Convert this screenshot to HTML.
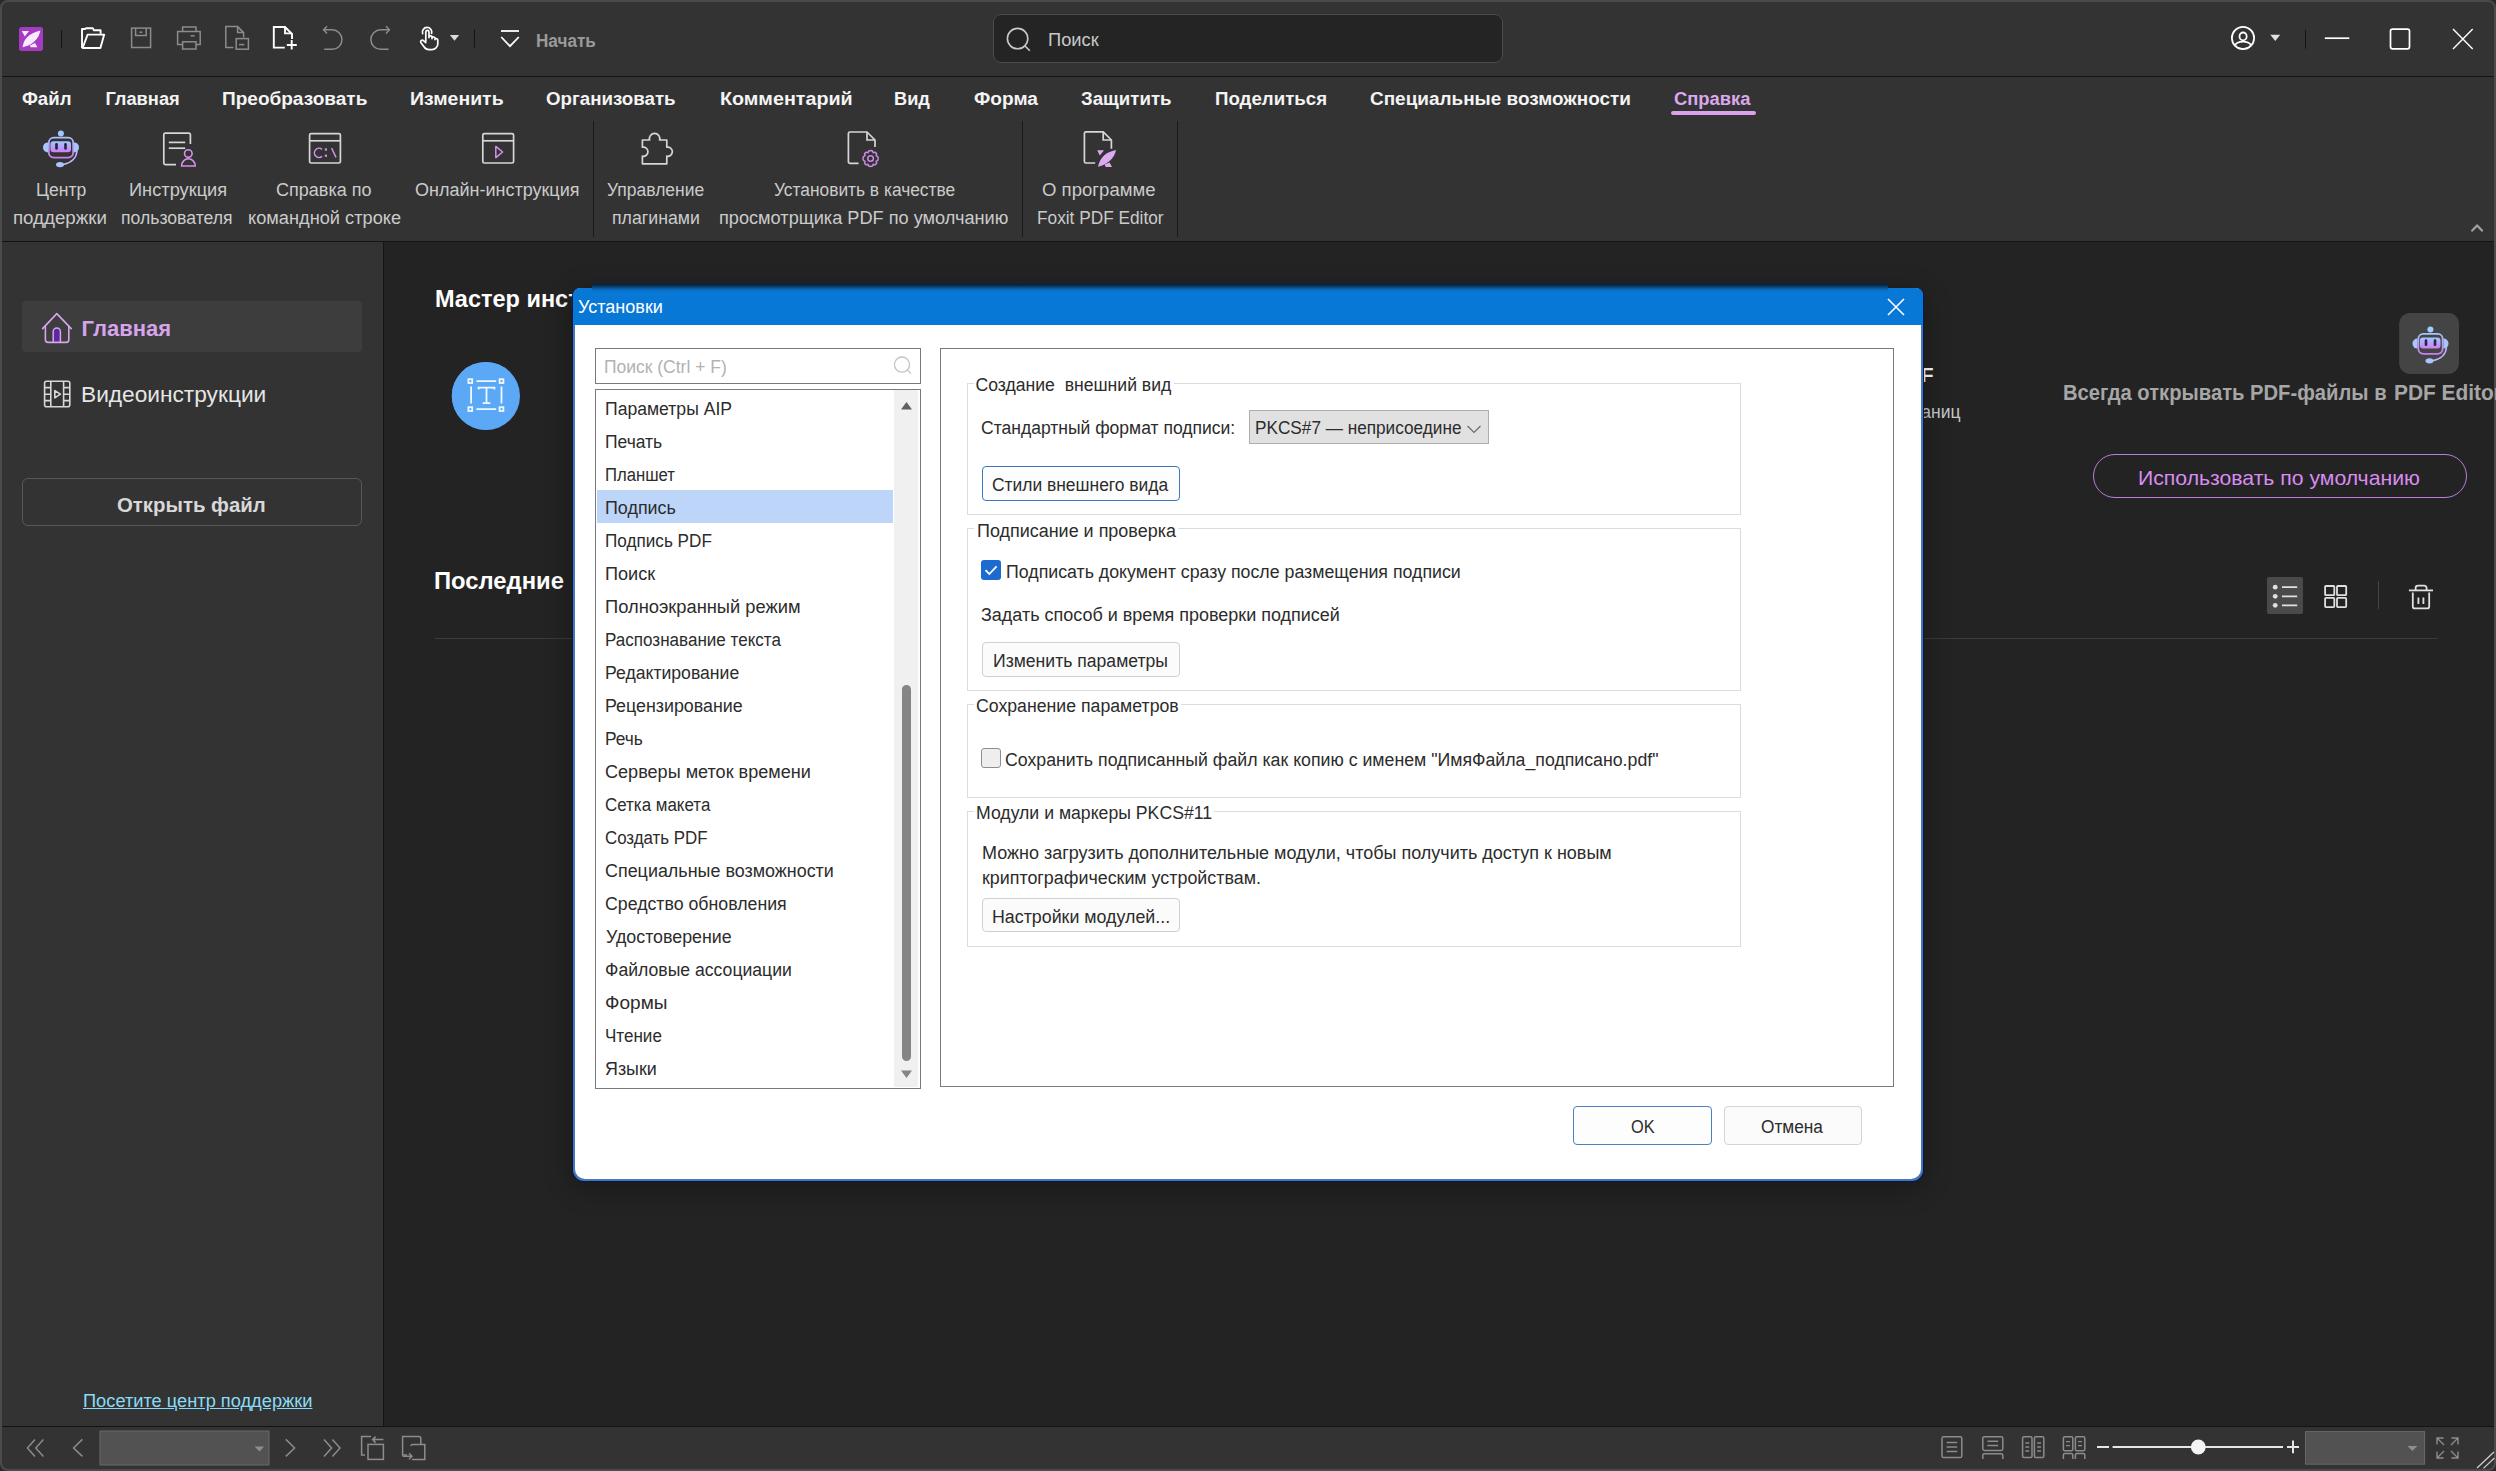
<!DOCTYPE html>
<html><head><meta charset="utf-8">
<style>
*{box-sizing:border-box;margin:0;padding:0}
html,body{width:2496px;height:1471px;overflow:hidden;background:#2a2a2a;font-family:"Liberation Sans",sans-serif}
.a{position:absolute}
.t{position:absolute;line-height:1;white-space:pre;top:calc(var(--b)*1px - 0.85em)}
.menu{font-size:18.3px;font-weight:700;color:#f4f4f4}
.rb{font-size:18px;color:#cbcbcb}
.dl{font-size:17.6px;color:#2c2c2c}
svg{position:absolute;overflow:visible}
</style></head><body>
<!-- window frame -->
<div class="a" style="left:0;top:0;width:2496px;height:1471px;background:#333;border-radius:8px"></div>
<!-- top toolbar line -->
<div class="a" style="left:0;top:76px;width:2496px;height:1px;background:#141414"></div>
<div class="a" style="left:0;top:241px;width:2496px;height:1px;background:#141414"></div>
<!-- main area -->
<div class="a" style="left:384px;top:242px;width:2112px;height:1184px;background:#232323"></div>
<div class="a" style="left:383px;top:242px;width:1px;height:1184px;background:#141414"></div>
<div class="a" style="left:0;top:1426px;width:2496px;height:1px;background:#141414"></div>
<!-- window border -->
<div class="a" style="left:0;top:0;width:2496px;height:1471px;border:2px solid #4b4b4b;border-radius:8px"></div>

<!-- SEARCH BOX -->
<div class="a" style="left:993px;top:14px;width:510px;height:49px;border:1px solid #4a4a4a;border-radius:8px;background:#242424"></div>
<div class="t" style="--b:46.5;left:1048.38px;font-size:18px;color:#c8c8c8;transform:scaleX(1.0164);transform-origin:0 0">Поиск</div>
<div class="t" style="--b:47;left:536.05px;font-size:18px;color:#9a9a9a;font-weight:700;transform:scaleX(0.9508);transform-origin:0 0">Начать</div>


<svg style="left:0;top:0" width="2496" height="1471" viewBox="0 0 2496 1471">
<!-- logo -->
<rect x="19" y="27" width="24" height="24" rx="2.5" fill="#a53bc1"/>
<path d="M21.8 31 L29 31 L24.8 36.4 Z" fill="#fbeaff"/>
<path d="M22.6 47.2 C23.4 40 28.5 33.2 40.4 30.6 C38.6 39.5 32 45.8 22.6 47.2 Z" fill="#fbeaff"/>
<path d="M30 45.6 L35 43 L37.4 47.2 L30.6 47.2 Z" fill="#fbeaff"/>
<line x1="61.5" y1="30" x2="61.5" y2="48" stroke="#141414" stroke-width="1"/>
<!-- folder -->
<g fill="none" stroke="#fff" stroke-width="1.9" stroke-linejoin="round">
<path d="M82 48 L82 29 L85 29 L86 28.2 L92.8 28.2 L93.8 30.2 L100.6 30.2 L100.6 33.8"/>
<path d="M82.6 48 L87.6 34.6 L104.2 34.6 L100.4 48 Z"/>
</g>
<!-- save -->
<g fill="none" stroke="#8c8c8c" stroke-width="1.5">
<rect x="131.6" y="28.1" width="19" height="19.4"/>
<path d="M135.6 28.1 L135.6 35.6 L146.2 35.6 L146.2 28.1"/>
<line x1="139.4" y1="32.2" x2="142.4" y2="32.2"/>
</g>
<!-- print -->
<g fill="none" stroke="#8c8c8c" stroke-width="1.5">
<path d="M182.6 31.3 L182.6 27 L196 27 L196 31.3"/>
<path d="M182.2 44.6 L177.6 44.6 L177.6 31.4 L200.2 31.4 L200.2 44.6 L196 44.6"/>
<rect x="182.6" y="41.8" width="13.4" height="7.2"/>
<line x1="190.6" y1="35.8" x2="194.6" y2="35.8"/>
</g>
<!-- export doc -->
<g fill="none" stroke="#8c8c8c" stroke-width="1.5">
<path d="M233.4 47.6 L225.8 47.6 L225.8 26.6 L237.6 26.6 L243.6 32.6 L243.6 37.4"/>
<path d="M237.6 26.6 L237.6 32.6 L243.6 32.6"/>
<rect x="236.2" y="38.6" width="12.2" height="10.6"/>
<line x1="239" y1="44.6" x2="244.4" y2="44.6"/>
</g>
<!-- new doc -->
<g fill="none" stroke="#fff" stroke-width="1.9">
<path d="M284.8 47.6 L273.8 47.6 L273.8 27 L285 27 L292 34 L292 39"/>
<path d="M285 27 L285 33.4 L292 33.4"/>
<path d="M286.8 45 L296.8 45 M291.7 40 L291.7 49.6"/>
</g>
<!-- undo / redo -->
<g fill="none" stroke="#8c8c8c" stroke-width="1.5">
<path d="M323.6 29.8 L332.2 29.8 A9.75 9.75 0 0 1 332.2 49.3 L324.2 49.3"/>
<path d="M327 26.2 L323.6 29.8 L327 33.4"/>
<path d="M389.4 29.8 L380.6 29.8 A9.75 9.75 0 0 0 380.6 49.3 L388.6 49.3"/>
<path d="M386 26.2 L389.4 29.8 L386 33.4"/>
</g>
<!-- hand -->
<g fill="none" stroke="#fff" stroke-width="1.7" stroke-linecap="round" stroke-linejoin="round">
<path d="M422.6 33.6 A4.7 4.7 0 1 1 431.6 33.4"/>
<path d="M425.8 41 L425.8 32 A1.6 1.6 0 0 1 429 32 L429 37.6 M429 37.2 A1.5 1.5 0 0 1 432 37.6 L432 38.6 M432 38.2 A1.5 1.5 0 0 1 435 38.8 L435 39.6 M435 39.4 A1.5 1.5 0 0 1 437.8 40.2 L437.8 44 A5.8 5.8 0 0 1 432 49.6 L429 49.6 A6 6 0 0 1 424 46.8 L420.8 42.4 A1.6 1.6 0 0 1 423.4 40.6 L425.8 42.6"/>
</g>
<path d="M449.9 35 L459.1 35 L454.5 40.8 Z" fill="#dcdcdc"/>
<line x1="474.5" y1="29.5" x2="474.5" y2="47.6" stroke="#141414" stroke-width="1"/>
<!-- filter -->
<g fill="none" stroke="#fff" stroke-width="1.8">
<line x1="501" y1="31" x2="519" y2="31"/>
<path d="M501.2 37 L510 46.2 L518.8 37"/>
</g>
<!-- search top -->
<g fill="none" stroke="#c8c8c8" stroke-width="1.6">
<circle cx="1017.6" cy="38.6" r="10.2"/>
<line x1="1024.8" y1="45.8" x2="1029.8" y2="50.8"/>
</g>
<!-- user -->
<g fill="none" stroke="#fff" stroke-width="1.8">
<circle cx="2243" cy="38" r="11.1"/>
<ellipse cx="2243.1" cy="36.4" rx="3.6" ry="3.9"/>
<clipPath id="uc"><circle cx="2243" cy="38" r="11"/></clipPath><ellipse cx="2243" cy="45.4" rx="7.7" ry="3.7" clip-path="url(#uc)"/>
</g>
<path d="M2270.3 34.8 L2280.2 34.8 L2275.25 41.1 Z" fill="#e0e0e0"/>
<line x1="2305.5" y1="30" x2="2305.5" y2="48.7" stroke="#141414" stroke-width="1"/>
<g fill="none" stroke="#fff" stroke-width="1.7">
<line x1="2324.8" y1="38.2" x2="2349.3" y2="38.2"/>
<rect x="2390.5" y="29.1" width="19" height="19.7" rx="2"/>
<path d="M2453 29 L2472.7 48.9 M2472.7 29 L2453 48.9" stroke-width="1.4"/>
</g>
</svg>

<!-- MENU -->
<div class="t menu" style="--b:106;left:22.00px;transform:scaleX(1.0167);transform-origin:0 0">Файл</div>
<div class="t menu" style="--b:106;left:105.40px;transform:scaleX(1.0000);transform-origin:0 0">Главная</div>
<div class="t menu" style="--b:106;left:222.36px;transform:scaleX(1.0407);transform-origin:0 0">Преобразовать</div>
<div class="t menu" style="--b:106;left:410.34px;transform:scaleX(1.0644);transform-origin:0 0">Изменить</div>
<div class="t menu" style="--b:106;left:546.40px;transform:scaleX(1.0238);transform-origin:0 0">Организовать</div>
<div class="t menu" style="--b:106;left:719.52px;transform:scaleX(1.0777);transform-origin:0 0">Комментарий</div>
<div class="t menu" style="--b:106;left:893.60px;transform:scaleX(0.9943);transform-origin:0 0">Вид</div>
<div class="t menu" style="--b:106;left:973.80px;transform:scaleX(1.0452);transform-origin:0 0">Форма</div>
<div class="t menu" style="--b:106;left:1081.00px;transform:scaleX(1.0205);transform-origin:0 0">Защитить</div>
<div class="t menu" style="--b:106;left:1215.18px;transform:scaleX(1.0223);transform-origin:0 0">Поделиться</div>
<div class="t menu" style="--b:106;left:1370.40px;transform:scaleX(1.0359);transform-origin:0 0">Специальные возможности</div>
<div class="t menu" style="--b:106;left:1674.20px;color:#dba8ec;transform:scaleX(1.0052);transform-origin:0 0">Справка</div>
<div class="a" style="left:1671px;top:111px;width:85px;height:4px;border-radius:2px;background:#d9a2ea"></div>

<!-- RIBBON LABELS -->
<div class="t rb" style="--b:196.3;left:35.82px;transform:scaleX(0.9760);transform-origin:0 0">Центр</div>
<div class="t rb" style="--b:224.5;left:12.96px;transform:scaleX(1.0387);transform-origin:0 0">поддержки</div>
<div class="t rb" style="--b:196.3;left:128.79px;transform:scaleX(1.0127);transform-origin:0 0">Инструкция</div>
<div class="t rb" style="--b:224.5;left:121.42px;transform:scaleX(0.9786);transform-origin:0 0">пользователя</div>
<div class="t rb" style="--b:196.3;left:275.60px;transform:scaleX(1.0022);transform-origin:0 0">Справка по</div>
<div class="t rb" style="--b:224.5;left:247.59px;transform:scaleX(1.0120);transform-origin:0 0">командной строке</div>
<div class="t rb" style="--b:196.3;left:415.00px;transform:scaleX(1.0000);transform-origin:0 0">Онлайн-инструкция</div>
<div class="a" style="left:593px;top:121px;width:1px;height:116px;background:#1a1a1a"></div>
<div class="t rb" style="--b:196.3;left:607.40px;transform:scaleX(0.9720);transform-origin:0 0">Управление</div>
<div class="t rb" style="--b:224.5;left:611.61px;transform:scaleX(0.9839);transform-origin:0 0">плагинами</div>
<div class="t rb" style="--b:196.3;left:773.80px;transform:scaleX(0.9638);transform-origin:0 0">Установить в качестве</div>
<div class="t rb" style="--b:224.5;left:718.79px;transform:scaleX(1.0091);transform-origin:0 0">просмотрщика PDF по умолчанию</div>
<div class="a" style="left:1022px;top:121px;width:1px;height:116px;background:#1a1a1a"></div>
<div class="t rb" style="--b:196.3;left:1042.37px;transform:scaleX(1.0312);transform-origin:0 0">О программе</div>
<div class="t rb" style="--b:224.5;left:1036.64px;transform:scaleX(0.9588);transform-origin:0 0">Foxit PDF Editor</div>
<div class="a" style="left:1177px;top:121px;width:1px;height:116px;background:#1a1a1a"></div>


<svg style="left:0;top:0" width="2496" height="1471" viewBox="0 0 2496 1471">
<defs>
<linearGradient id="rg" x1="0" y1="0" x2="0" y2="1"><stop offset="0" stop-color="#9cc8ff"/><stop offset="1" stop-color="#d07ef0"/></linearGradient>
<linearGradient id="rg2" x1="0" y1="0" x2="0" y2="1"><stop offset="0" stop-color="#a8c4ff"/><stop offset="1" stop-color="#c77ff0"/></linearGradient>
</defs>
<!-- robot ribbon -->
<g>
<circle cx="60.9" cy="133.4" r="3" fill="#a0c8ff"/>
<path d="M48.2 147.4 A5.6 5.2 0 0 0 48.2 142.4 L48.2 152.4 Z" fill="#a9c4ff"/>
<path d="M43 147.4 A5 5 0 0 1 48 142.4 L48 152.4 A5 5 0 0 1 43 147.4 Z" fill="#a9c4ff"/>
<path d="M79 147.4 A5 5 0 0 0 74 142.4 L74 152.4 A5 5 0 0 0 79 147.4 Z" fill="#a9c4ff"/>
<rect x="48.8" y="137.6" width="24.4" height="20" rx="5" fill="none" stroke="url(#rg2)" stroke-width="1.8"/>
<rect x="50.4" y="141.2" width="20.6" height="11" rx="3" fill="url(#rg)"/>
<rect x="55.2" y="143" width="2.6" height="6.8" rx="1.3" fill="#2a1f48"/>
<rect x="64.2" y="143" width="2.6" height="6.8" rx="1.3" fill="#2a1f48"/>
<path d="M77 151 Q76 162 63 164.6" fill="none" stroke="#c0b8ff" stroke-width="1.5"/>
<ellipse cx="60" cy="164.6" rx="4" ry="2.6" fill="#a9c4ff"/>
</g>
<!-- instruction -->
<g fill="none" stroke="#d6d6d6" stroke-width="1.7">
<path d="M176 164.6 L165.4 164.6 A1.6 1.6 0 0 1 163.8 163 L163.8 134.8 A1.6 1.6 0 0 1 165.4 133.2 L188.8 133.2 A1.6 1.6 0 0 1 190.4 134.8 L190.4 144"/>
<line x1="168.8" y1="142.4" x2="185.2" y2="142.4"/>
<line x1="168.8" y1="148.2" x2="185.2" y2="148.2"/>
</g>
<g fill="none" stroke="#d690ec" stroke-width="1.6">
<circle cx="188.3" cy="153.6" r="3.8"/>
<path d="M181.6 166 A6.8 7.2 0 0 1 195.2 166 Z"/>
</g>
<!-- cmd -->
<g fill="none" stroke="#d6d6d6" stroke-width="1.7">
<rect x="309.6" y="133.6" width="30.8" height="29.4" rx="1.6"/>
<line x1="309.6" y1="140.8" x2="340.4" y2="140.8"/>
</g>
<g fill="none" stroke="#d690ec" stroke-width="1.5">
<path d="M322 149.4 A4.6 4.6 0 1 0 322 156.4"/>
<line x1="331.6" y1="148" x2="336" y2="157.4"/>
</g>
<rect x="324.8" y="148.4" width="2.2" height="2.2" fill="#d690ec"/>
<rect x="324.8" y="154.6" width="2.2" height="2.2" fill="#d690ec"/>
<!-- video ribbon -->
<g fill="none" stroke="#d6d6d6" stroke-width="1.7">
<rect x="482.8" y="133.6" width="30.8" height="29.4" rx="1.6"/>
<line x1="482.8" y1="140.8" x2="513.6" y2="140.8"/>
</g>
<path d="M495.8 146.4 L502.6 152 L495.8 157.6 Z" fill="none" stroke="#d690ec" stroke-width="1.5" stroke-linejoin="round"/>
<!-- puzzle -->
<path d="M642.4 140 L649.6 140 A5.2 5.2 0 1 1 659.6 140 L666.8 140 L666.8 147.2 A4.6 4.6 0 1 1 666.8 156.2 L666.8 163.8 L642.4 163.8 L642.4 156.2 A4.6 4.6 0 1 0 642.4 147.2 Z" fill="none" stroke="#d6d6d6" stroke-width="1.7" stroke-linejoin="round"/>
<!-- gear doc -->
<g fill="none" stroke="#d6d6d6" stroke-width="1.7">
<path d="M858.6 163.4 L850 163.4 A1.6 1.6 0 0 1 848.4 161.8 L848.4 133.6 A1.6 1.6 0 0 1 850 132 L867 132 L875 140 L875 147"/>
<path d="M867 132 L867 140 L875 140"/>
</g>
<g fill="none" stroke="#c88ae6" stroke-width="1.5">
<path d="M870.6 150.6 L872.4 151 L873.2 152.6 L875.2 152.2 L876.6 153.6 L876.2 155.6 L877.8 156.6 L878.2 158.4 L877.8 160.4 L876.2 161.4 L876.6 163.4 L875.2 164.8 L873.2 164.4 L872.4 166 L870.6 166.4 L868.8 166 L868 164.4 L866 164.8 L864.6 163.4 L865 161.4 L863.4 160.4 L863 158.4 L863.4 156.6 L865 155.6 L864.6 153.6 L866 152.2 L868 152.6 L868.8 151 Z"/>
<circle cx="870.6" cy="158.5" r="2.8"/>
</g>
<!-- about doc -->
<g fill="none" stroke="#d6d6d6" stroke-width="1.7">
<path d="M1095.2 163 L1086 163 A1.6 1.6 0 0 1 1084.4 161.4 L1084.4 133.4 A1.6 1.6 0 0 1 1086 131.8 L1103.2 131.8 L1111.4 140 L1111.4 148.8"/>
<path d="M1103.2 131.8 L1103.2 140 L1111.4 140"/>
</g>
<g fill="#dcaaee">
<path d="M1097.2 150.2 L1104 150.2 L1099.8 155.4 Z"/>
<path d="M1098 166.8 C1099.6 158 1105.6 152 1116 150 C1114.4 158 1108 164.4 1098 166.8 Z"/>
<path d="M1104.6 164.6 L1109.6 162.6 L1112 167 L1105.8 167 Z"/>
</g>
<!-- separators at ribbon already -->
</svg>

<!-- LEFT PANEL -->
<div class="a" style="left:22px;top:301px;width:340px;height:51px;border-radius:4px;background:#3d3d3d"></div>
<div class="t" style="--b:336.4;left:81.60px;font-size:22px;font-weight:700;color:#d6a4ea;transform:scaleX(1.0000);transform-origin:0 0">Главная</div>
<div class="t" style="--b:402.3;left:81.17px;font-size:22px;color:#e6e6e6;transform:scaleX(1.0316);transform-origin:0 0">Видеоинструкции</div>
<div class="a" style="left:22px;top:478px;width:340px;height:48px;border:1px solid #585858;border-radius:6px"></div>
<div class="t" style="--b:512.4;left:116.79px;font-size:20.3px;font-weight:700;color:#d8d8d8;transform:scaleX(1.0055);transform-origin:0 0">Открыть файл</div>
<div class="t" style="--b:1407.7;left:82.58px;font-size:18px;color:#88dcf6;text-decoration:underline;transform:scaleX(1.0134);transform-origin:0 0">Посетите центр поддержки</div>

<!-- MAIN -->
<div class="t" style="--b:307.7;left:435px;font-size:23.5px;font-weight:700;color:#fff">Мастер инструментов PDF</div>
<div class="a" style="left:452px;top:362px;width:68px;height:68px;border-radius:50%;background:#5aa6f0"></div>
<div class="t" style="--b:589.5;left:434.39px;font-size:23.5px;font-weight:700;color:#fff;transform:scaleX(1.0126);transform-origin:0 0">Последние</div>
<div class="a" style="left:435px;top:638px;width:2003px;height:1px;background:#3a3a3a"></div>
<div class="t" style="--b:401;left:2062.5px;font-size:22px;font-weight:700;color:#a6a6a6;transform:scaleX(0.918);transform-origin:0 0">Всегда открывать PDF-файлы в</div>
<div class="t" style="--b:401;left:2393.6px;font-size:22px;font-weight:700;color:#a6a6a6;transform:scaleX(0.95);transform-origin:0 0">PDF Editor</div>
<svg style="left:0;top:0" width="2496" height="300" viewBox="0 0 2496 300"><path d="M2472.2 230.6 L2477.1 225.4 L2482 230.6" fill="none" stroke="#a2a2a2" stroke-width="2.2" stroke-linecap="round" stroke-linejoin="round"/></svg>
<div class="a" style="left:2093px;top:454px;width:374px;height:44px;border:1.5px solid #b97fd8;border-radius:22px"></div>
<div class="t" style="--b:484.6;left:2138.39px;font-size:21px;color:#d98cf2;transform:scaleX(1.0094);transform-origin:0 0">Использовать по умолчанию</div>
<div class="a" style="left:2399px;top:313px;width:60px;height:61px;border-radius:12px;background:#3b3b3b"></div>
<div class="a" style="left:2267px;top:577px;width:36px;height:37px;border-radius:2px;background:#4a4a4a"></div>
<div class="a" style="left:2378px;top:581px;width:1px;height:28px;background:#444"></div>


<svg style="left:0;top:0" width="2496" height="1471" viewBox="0 0 2496 1471">
<!-- home -->
<g fill="none" stroke="#d9a4ee" stroke-width="1.6" stroke-linejoin="round" stroke-linecap="round">
<path d="M42.6 328.6 L56.8 313.6 L71.2 328.6"/>
<path d="M45.4 326.4 L45.4 339.8 A2.6 2.6 0 0 0 48 342.4 L66.2 342.4 A2.6 2.6 0 0 0 68.8 339.8 L68.8 326.4"/>
</g>
<path d="M53.2 342.2 L53.2 331.6 A3.6 3.6 0 0 1 60.4 331.6 L60.4 342.2 Z" fill="#5b2aa0" stroke="#d9a4ee" stroke-width="1.5"/>
<!-- film -->
<g fill="none" stroke="#d8d8d8" stroke-width="1.6">
<rect x="44.6" y="381.2" width="25.2" height="25.6" rx="2"/>
<line x1="50.8" y1="381.2" x2="50.8" y2="406.8"/>
<line x1="63.6" y1="381.2" x2="63.6" y2="406.8"/>
<path d="M44.6 387.6 H50.8 M44.6 394.2 H50.8 M44.6 400.6 H50.8 M63.6 387.6 H69.8 M63.6 394.2 H69.8 M63.6 400.6 H69.8"/>
<path d="M54.8 390.6 L60.4 394.2 L54.8 397.8 Z" stroke-linejoin="round"/>
</g>
<!-- blue circle T -->
<circle cx="485.5" cy="395.8" r="33.8" fill="#5ba8f7"/>
<g fill="none" stroke="#eef8ff" stroke-width="1.8">
<rect x="468.4" y="379.2" width="3.8" height="3.8"/>
<rect x="499.6" y="379.2" width="3.8" height="3.8"/>
<rect x="468.4" y="407.2" width="3.8" height="3.8"/>
<rect x="499.6" y="407.2" width="3.8" height="3.8"/>
<path d="M476.4 381.1 H496.2 M476.4 409.1 H496.2 M471.1 386.4 V403.6 M501.5 386.4 V403.6"/>
<path d="M478.6 389.6 V387.6 H494.4 V389.6 M486.5 387.6 V403.2 M482.6 403.2 H490.4"/>
</g>
<!-- robot button -->
<rect x="2399.5" y="313" width="59.3" height="60.8" rx="10" fill="#444"/>
<g transform="translate(2369.5 196.2)">
<circle cx="60.9" cy="133.4" r="3" fill="#a0d0f8"/>
<path d="M43 147.4 A5 5 0 0 1 48 142.4 L48 152.4 A5 5 0 0 1 43 147.4 Z" fill="#a9c4ff"/>
<path d="M79 147.4 A5 5 0 0 0 74 142.4 L74 152.4 A5 5 0 0 0 79 147.4 Z" fill="#a9c4ff"/>
<rect x="48.8" y="137.6" width="24.4" height="20" rx="5" fill="none" stroke="url(#rg2)" stroke-width="1.8"/>
<rect x="50.4" y="141.2" width="20.6" height="11" rx="3" fill="url(#rg)"/>
<rect x="55.2" y="143" width="2.6" height="6.8" rx="1.3" fill="#2a1f48"/>
<rect x="64.2" y="143" width="2.6" height="6.8" rx="1.3" fill="#2a1f48"/>
<path d="M77 151 Q76 162 63 164.6" fill="none" stroke="#c0b8ff" stroke-width="1.5"/>
<ellipse cx="60" cy="164.6" rx="4" ry="2.6" fill="#a9c4ff"/>
</g>
<!-- list/grid/trash -->
<g fill="#e0e0e0">
<circle cx="2275.2" cy="587.2" r="2.4"/><circle cx="2275.2" cy="596.3" r="2.4"/><circle cx="2275.2" cy="605.3" r="2.4"/>
</g>
<g fill="none" stroke="#e0e0e0" stroke-width="1.8">
<path d="M2282 587.2 H2297.2 M2282 596.3 H2297.2 M2282 605.3 H2297.2"/>
<rect x="2325.1" y="586" width="9.2" height="9.2" rx="0.8"/>
<rect x="2337" y="586" width="9.2" height="9.2" rx="0.8"/>
<rect x="2325.1" y="597.9" width="9.2" height="9.2" rx="0.8"/>
<rect x="2337" y="597.9" width="9.2" height="9.2" rx="0.8"/>
<path d="M2408.9 590.4 H2433"/>
<path d="M2415.6 590.4 V588 A2.4 2.4 0 0 1 2418 585.6 H2424.2 A2.4 2.4 0 0 1 2426.6 588 V590.4"/>
<path d="M2412.8 592.6 V606.4 A2 2 0 0 0 2414.8 608.4 H2427.2 A2 2 0 0 0 2429.2 606.4 V592.6"/>
<path d="M2418.4 597.4 V604 M2423.4 597.4 V604"/>
</g>
<!-- status bar left -->
<g fill="none" stroke="#8c8c8c" stroke-width="1.5">
<path d="M35 1439.4 L27.4 1448 L35 1456.4 M43.4 1439.4 L35.8 1448 L43.4 1456.4"/>
<path d="M82.4 1439.4 L73.6 1448 L82.4 1456.4"/>
<path d="M285.8 1439.4 L294.6 1448 L285.8 1456.4"/>
<path d="M324 1439.4 L331.6 1448 L324 1456.4 M332.4 1439.4 L340 1448 L332.4 1456.4"/>
<path d="M371 1436.4 H361.6 V1455 H365"/>
<rect x="368" y="1444.4" width="15.4" height="15"/>
<path d="M383.4 1439.6 H372.6 M375.6 1436.6 L372.6 1439.6 L375.6 1442.6"/>
<path d="M407 1455 H402.6 V1436.4 H418.8 A2 2 0 0 1 420.8 1438.4 V1444"/>
<path d="M411 1446 A1.6 1.6 0 0 1 412.6 1444.4 H424.8 V1459.4 H412"/>
<path d="M402.6 1456.2 H412 M409 1453.2 L412 1456.2 L409 1459.2"/>
</g>
<rect x="100" y="1431" width="169" height="34" fill="#525252" stroke="#696969" stroke-width="1"/>
<path d="M254.6 1446.4 H264.2 L259.4 1451.6 Z" fill="#8e8e8e"/>
<!-- status bar right -->
<g fill="none" stroke="#8c8c8c" stroke-width="1.5">
<rect x="1942" y="1436.8" width="19.8" height="20.8" rx="1.6"/>
<path d="M1946.6 1442.4 H1957.2 M1946.6 1447 H1957.2 M1946.6 1451.6 H1957.2"/>
<rect x="1982.8" y="1436.8" width="20" height="13.6" rx="1.6"/>
<path d="M1987.4 1441.2 H1998.2 M1987.4 1445.6 H1998.2"/>
<path d="M1982.8 1459 V1455.4 A1.6 1.6 0 0 1 1984.4 1453.8 H2001.2 A1.6 1.6 0 0 1 2002.8 1455.4 V1459"/>
<rect x="2022.6" y="1436.8" width="9.4" height="20.8" rx="1.4"/>
<rect x="2034.4" y="1436.8" width="9.4" height="20.8" rx="1.4"/>
<path d="M2025.4 1443 H2029.2 M2025.4 1447 H2029.2 M2025.4 1451 H2029.2 M2037.2 1443 H2041 M2037.2 1447 H2041 M2037.2 1451 H2041" stroke-width="1.3"/>
<rect x="2063.4" y="1436.8" width="9.4" height="14" rx="1.4"/>
<rect x="2075.4" y="1436.8" width="9.4" height="14" rx="1.4"/>
<path d="M2066 1441.6 H2070 M2066 1445.6 H2070 M2078 1441.6 H2082 M2078 1445.6 H2082" stroke-width="1.3"/>
<path d="M2063.4 1459 V1455 A1.4 1.4 0 0 1 2064.8 1453.6 H2071.4 A1.4 1.4 0 0 1 2072.8 1455 V1459 M2075.4 1459 V1455 A1.4 1.4 0 0 1 2076.8 1453.6 H2083.4 A1.4 1.4 0 0 1 2084.8 1455 V1459"/>
<path d="M2437 1444.6 V1438 H2443.6 M2437 1438 L2444 1445 M2458 1444.6 V1438 H2451.4 M2458 1438 L2451 1445 M2437 1451.4 V1458 H2443.6 M2437 1458 L2444 1451 M2458 1451.4 V1458 H2451.4 M2458 1458 L2451 1451" stroke-width="1.4"/>
</g>
<g stroke="#e6e6e6" stroke-width="2" fill="none">
<path d="M2097 1447 H2109 M2112.6 1447 H2283 M2287 1447 H2299 M2293 1440.6 V1453.2"/>
</g>
<circle cx="2198.3" cy="1447" r="7.4" fill="#f4f4f4"/>
<rect x="2305.6" y="1431.6" width="119" height="32.6" fill="#525252" stroke="#696969" stroke-width="1"/>
<path d="M2407.4 1446 H2417.4 L2412.4 1451 Z" fill="#8e8e8e"/>
<path d="M2477 1468 L2494 1452 M2483.4 1468.4 L2494.4 1458" stroke="#d0d0d0" stroke-width="1.2"/>
</svg>

<div class="t" style="--b:382;right:562.5px;font-size:21px;font-weight:700;color:#fff">Редактировать PDF</div>
<div class="t" style="--b:419;right:535.5px;font-size:17.5px;color:#c8c8c8">Объединение страниц</div>
<!-- DIALOG -->
<div class="a" style="left:572px;top:288px;width:1352px;height:894px;background:#001a50;border-radius:8px 8px 12px 12px;box-shadow:0 6px 28px rgba(0,0,0,0.3)"></div>
<div class="a" style="left:573px;top:288px;width:1350px;height:893px;background:#4677b8;border-radius:7px 7px 11px 11px"></div>
<div class="a" style="left:575px;top:288px;width:1346px;height:891px;background:#fff;border-radius:6px 6px 10px 10px"></div>
<div class="a" style="left:573px;top:288px;width:1350px;height:36.6px;background:#0778d6;border-radius:7px 7px 0 0"></div>
<div class="a" style="left:592px;top:281px;width:1296px;height:11px;background:linear-gradient(#232323 0%,#0b2436 35%,#0c4f8e 62%,#0b6cc0 80%,#0778d6 100%)"></div>
<div class="t" style="--b:314;left:578.3px;font-size:17.6px;color:#fff;transform:scaleX(1.025);transform-origin:0 0">Установки</div>


<!-- search -->
<div class="a" style="left:595px;top:348px;width:326px;height:36px;border:1px solid #7a7a7a;background:#fff"></div>
<div class="t dl" style="--b:373.6;left:604.41px;color:#b2b2b2;transform:scaleX(0.9934);transform-origin:0 0">Поиск (Ctrl + F)</div>
<svg style="left:893px;top:356px" width="20" height="20" viewBox="0 0 20 20"><circle cx="9" cy="8.6" r="7.6" fill="none" stroke="#c4c4c4" stroke-width="1.3"/><path d="M14.5 14 L18 17.6" stroke="#c4c4c4" stroke-width="1.3"/></svg>
<!-- list -->
<div class="a" style="left:595px;top:389px;width:326px;height:700px;border:1px solid #7a7a7a;background:#fff"></div>
<div class="a" style="left:894px;top:390px;width:24px;height:697px;background:#f0f0f0"></div>
<div class="a" style="left:901.5px;top:685px;width:9.5px;height:376px;border-radius:5px;background:#858585"></div>
<svg style="left:900px;top:401px" width="13" height="9" viewBox="0 0 13 9"><path d="M6.5 1 L12 8.5 L1 8.5 Z" fill="#606060"/></svg>
<svg style="left:900px;top:1070px" width="13" height="9" viewBox="0 0 13 9"><path d="M1 0.5 L12 0.5 L6.5 8 Z" fill="#858585"/></svg>
<div class="a" style="left:597px;top:490px;width:296px;height:33px;background:#bcd5f8"></div>
<div class="t dl" style="--b:416;left:605.00px;transform:scaleX(1.0001);transform-origin:0 0">Параметры AIP</div>
<div class="t dl" style="--b:449;left:605.00px;transform:scaleX(0.9929);transform-origin:0 0">Печать</div>
<div class="t dl" style="--b:482;left:605.06px;transform:scaleX(0.9480);transform-origin:0 0">Планшет</div>
<div class="t dl" style="--b:515;left:604.99px;transform:scaleX(1.0177);transform-origin:0 0">Подпись</div>
<div class="t dl" style="--b:548;left:605.03px;transform:scaleX(0.9741);transform-origin:0 0">Подпись PDF</div>
<div class="t dl" style="--b:581;left:604.97px;transform:scaleX(1.0292);transform-origin:0 0">Поиск</div>
<div class="t dl" style="--b:614;left:604.96px;transform:scaleX(1.0408);transform-origin:0 0">Полноэкранный режим</div>
<div class="t dl" style="--b:647;left:605.03px;transform:scaleX(0.9690);transform-origin:0 0">Распознавание текста</div>
<div class="t dl" style="--b:680;left:605.00px;transform:scaleX(1.0015);transform-origin:0 0">Редактирование</div>
<div class="t dl" style="--b:713;left:604.99px;transform:scaleX(1.0135);transform-origin:0 0">Рецензирование</div>
<div class="t dl" style="--b:746;left:604.81px;transform:scaleX(0.9839);transform-origin:0 0">Речь</div>
<div class="t dl" style="--b:779;left:604.77px;transform:scaleX(1.0271);transform-origin:0 0">Серверы меток времени</div>
<div class="t dl" style="--b:812;left:604.84px;transform:scaleX(0.9633);transform-origin:0 0">Сетка макета</div>
<div class="t dl" style="--b:845;left:604.84px;transform:scaleX(0.9585);transform-origin:0 0">Создать PDF</div>
<div class="t dl" style="--b:878;left:604.78px;transform:scaleX(1.0188);transform-origin:0 0">Специальные возможности</div>
<div class="t dl" style="--b:911;left:604.79px;transform:scaleX(1.0079);transform-origin:0 0">Средство обновления</div>
<div class="t dl" style="--b:944;left:605.80px;transform:scaleX(1.0130);transform-origin:0 0">Удостоверение</div>
<div class="t dl" style="--b:977;left:604.80px;transform:scaleX(1.0010);transform-origin:0 0">Файловые ассоциации</div>
<div class="t dl" style="--b:1010;left:604.72px;transform:scaleX(1.0822);transform-origin:0 0">Формы</div>
<div class="t dl" style="--b:1043;left:604.83px;transform:scaleX(0.9687);transform-origin:0 0">Чтение</div>
<div class="t dl" style="--b:1076;left:604.78px;transform:scaleX(1.0165);transform-origin:0 0">Языки</div>

<!-- right box -->
<div class="a" style="left:940px;top:348px;width:954px;height:739px;border:1px solid #7a7a7a;background:#fff"></div>
<!-- group 1 -->
<div class="a" style="left:967px;top:383px;width:774px;height:132px;border:1px solid #dcdcdc"></div>
<div class="a" style="left:973.5px;top:375px;width:200.8px;height:14px;background:#fff"></div>
<div class="t dl" style="--b:391.8;left:975.50px;transform:scaleX(1.0000);transform-origin:0 0">Создание  внешний вид</div>
<div class="t dl" style="--b:434.9;left:980.80px;transform:scaleX(0.9960);transform-origin:0 0">Стандартный формат подписи:</div>
<div class="a" style="left:1249px;top:410px;width:240px;height:34px;border:1px solid #adadad;background:#e1e1e1"></div>
<div class="t dl" style="--b:434.9;left:1254.82px;transform:scaleX(0.9772);transform-origin:0 0">PKCS#7 — неприсоедине</div>
<svg style="left:1466px;top:424px" width="16" height="10" viewBox="0 0 16 10"><path d="M1.5 2 L8 8.5 L14.5 2" fill="none" stroke="#6a6a6a" stroke-width="1.2"/></svg>
<div class="a" style="left:982px;top:466px;width:198px;height:35px;border:1px solid #3b77c2;border-radius:4px;background:#fdfdfd"></div>
<div class="t dl" style="--b:492.4;left:992.01px;transform:scaleX(0.9898);transform-origin:0 0">Стили внешнего вида</div>
<!-- group 2 -->
<div class="a" style="left:967px;top:528px;width:774px;height:163px;border:1px solid #dcdcdc"></div>
<div class="a" style="left:973.5px;top:520px;width:204.8px;height:14px;background:#fff"></div>
<div class="t dl" style="--b:538;left:976.97px;transform:scaleX(1.0206);transform-origin:0 0">Подписание и проверка</div>
<div class="a" style="left:981px;top:560px;width:20px;height:20px;border-radius:3px;background:#1d6bd0"></div>
<svg style="left:981px;top:560px" width="20" height="20" viewBox="0 0 20 20"><path d="M4.5 10.2 L8.3 14 L15.6 6.4" fill="none" stroke="#fff" stroke-width="1.8"/></svg>
<div class="t dl" style="--b:578.5;left:1005.68px;transform:scaleX(1.0098);transform-origin:0 0">Подписать документ сразу после размещения подписи</div>
<div class="t dl" style="--b:622.1;left:980.78px;transform:scaleX(1.0212);transform-origin:0 0">Задать способ и время проверки подписей</div>
<div class="a" style="left:982px;top:642px;width:198px;height:35px;border:1px solid #d0d0d0;border-radius:4px;background:#fbfbfb"></div>
<div class="t dl" style="--b:668.1;left:993px">Изменить параметры</div>
<!-- group 3 -->
<div class="a" style="left:967px;top:704.2px;width:774px;height:93.8px;border:1px solid #dcdcdc"></div>
<div class="a" style="left:973.5px;top:697px;width:207.5px;height:14px;background:#fff"></div>
<div class="t dl" style="--b:713.2;left:975.70px;transform:scaleX(1.0060);transform-origin:0 0">Сохранение параметров</div>
<div class="a" style="left:981px;top:747.6px;width:20px;height:20px;border:1px solid #8e8e8e;border-radius:3px;background:#eeeeee"></div>
<div class="t dl" style="--b:766.5;left:1004.59px;transform:scaleX(1.0077);transform-origin:0 0">Сохранить подписанный файл как копию с именем "ИмяФайла_подписано.pdf"</div>
<!-- group 4 -->
<div class="a" style="left:967px;top:811px;width:774px;height:136px;border:1px solid #dcdcdc"></div>
<div class="a" style="left:973.5px;top:803px;width:240.8px;height:14px;background:#fff"></div>
<div class="t dl" style="--b:819.9;left:975.69px;transform:scaleX(1.0034);transform-origin:0 0">Модули и маркеры PKCS#11</div>
<div class="t dl" style="--b:859.7;left:981.86px;transform:scaleX(1.0229);transform-origin:0 0">Можно загрузить дополнительные модули, чтобы получить доступ к новым</div>
<div class="t dl" style="--b:884.7;left:981.89px;transform:scaleX(1.0154);transform-origin:0 0">криптографическим устройствам.</div>
<div class="a" style="left:982px;top:897.6px;width:198px;height:34.6px;border:1px solid #d0d0d0;border-radius:4px;background:#fbfbfb"></div>
<div class="t dl" style="--b:924.2;left:992.39px;transform:scaleX(1.0127);transform-origin:0 0">Настройки модулей...</div>
<!-- buttons -->
<div class="a" style="left:1573px;top:1106px;width:139px;height:39px;border:1px solid #4a7fc1;border-radius:4px;background:#fdfdfd"></div>
<div class="t dl" style="--b:1134;left:1630.74px;transform:scaleX(0.9320);transform-origin:0 0">OK</div>
<div class="a" style="left:1724px;top:1106px;width:138px;height:39px;border:1px solid #d4d4d4;border-radius:4px;background:#fbfbfb"></div>
<div class="t dl" style="--b:1134;left:1760.71px;transform:scaleX(0.9812);transform-origin:0 0">Отмена</div>
<!-- close X -->
<svg style="left:1887px;top:298px" width="18" height="18" viewBox="0 0 18 18"><path d="M1 1 L17 17 M17 1 L1 17" stroke="#fff" stroke-width="1.6"/></svg>

</body></html>
